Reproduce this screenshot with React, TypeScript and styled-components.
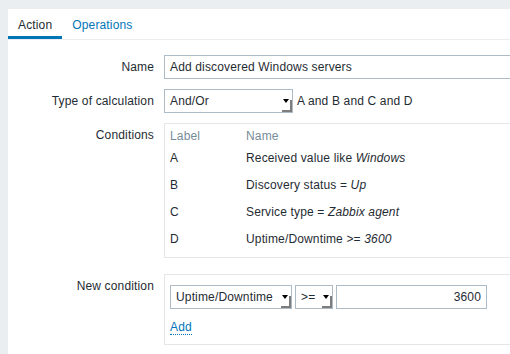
import React from 'react';
import styled, { createGlobalStyle } from 'styled-components';

const GlobalStyle = createGlobalStyle`
  html, body {
    margin: 0;
    padding: 0;
    background: #ebeef0;
    overflow: hidden;
  }
  body {
    font-family: "Liberation Sans", Arial, sans-serif;
    font-size: 12px;
    letter-spacing: 0.15px;
    color: #1f2c33;
  }
`;

const Page = styled.div`
  padding: 9px 0 0 8px;
  height: 354px;
  box-sizing: border-box;
`;

const Panel = styled.div`
  background: #ffffff;
  height: 100%;
  overflow: hidden;
`;

const TabBar = styled.div`
  display: flex;
  border-bottom: 1px solid #ebeef0;
`;

const Tab = styled.div<{ $active?: boolean }>`
  height: 30px;
  box-sizing: border-box;
  padding: 9px 10px 0;
  line-height: 14px;
  border-bottom: 3px solid ${p => (p.$active ? '#0275b8' : 'transparent')};
  color: ${p => (p.$active ? '#1f2c33' : '#0275b8')};
`;

// the form is wider than the window; the panel clips it on the right
const Form = styled.div`
  padding-top: 15px;
  width: 620px;
`;

const FormRow = styled.div<{ $space?: number }>`
  display: grid;
  grid-template-columns: 146px 1fr;
  column-gap: 10px;
  margin-bottom: ${p => p.$space ?? 10}px;
`;

const RowLabel = styled.div`
  text-align: right;
  line-height: 24px;
  white-space: nowrap;
`;

const RowField = styled.div<{ $gap?: number }>`
  display: flex;
  align-items: center;
  gap: ${p => p.$gap ?? 4}px;
`;

const TextInput = styled.div<{ $width: number; $right?: boolean }>`
  width: ${p => p.$width}px;
  height: 24px;
  box-sizing: border-box;
  border: 1px solid #acbbc5;
  padding: 0 5px;
  line-height: 22px;
  text-align: ${p => (p.$right ? 'right' : 'left')};
  white-space: nowrap;
  overflow: hidden;
  flex-shrink: 0;
`;

const Select = styled.div<{ $width: number }>`
  width: ${p => p.$width}px;
  height: 24px;
  box-sizing: border-box;
  border: 1px solid #acbbc5;
  display: flex;
  flex-shrink: 0;
`;

const SelectText = styled.div`
  flex: 1;
  padding-left: 5px;
  line-height: 22px;
  white-space: nowrap;
  overflow: hidden;
`;

const SelectArrow = styled.div`
  width: 10px;
  display: flex;
  justify-content: center;
  padding-top: 9px;
  box-sizing: border-box;
  background:
    linear-gradient(#7d7d7d, #7d7d7d) right bottom / 2px 55% no-repeat,
    linear-gradient(#7d7d7d, #7d7d7d) right bottom / 100% 2px no-repeat;

  &::after {
    content: '';
    width: 0;
    height: 0;
    margin-right: 2px;
    border-left: 3px solid transparent;
    border-right: 3px solid transparent;
    border-top: 4px solid #000;
  }
`;

const Hint = styled.span`
  white-space: nowrap;
`;

const Box = styled.div<{ $pad: string }>`
  border: 1px solid #e3e7ea;
  padding: ${p => p.$pad};
`;

const CondTable = styled.div`
  display: grid;
  grid-template-columns: 76px 1fr;
`;

const HeadCell = styled.div`
  color: #768d99;
  line-height: 17px;
`;

const Cell = styled.div`
  line-height: 27px;
  white-space: nowrap;
`;

const LinkRow = styled.div`
  margin-top: 11px;
  line-height: 14px;
`;

const Link = styled.span`
  color: #0275b8;
  border-bottom: 1px dotted #0275b8;
`;

const conditions: { label: string; text: string; value: string }[] = [
  { label: 'A', text: 'Received value like ', value: 'Windows' },
  { label: 'B', text: 'Discovery status = ', value: 'Up' },
  { label: 'C', text: 'Service type = ', value: 'Zabbix agent' },
  { label: 'D', text: 'Uptime/Downtime >= ', value: '3600' },
];

export default function App() {
  return (
    <>
      <GlobalStyle />
      <Page>
        <Panel>
          <TabBar>
            <Tab $active>Action</Tab>
            <Tab>Operations</Tab>
          </TabBar>
          <Form>
            <FormRow>
              <RowLabel>Name</RowLabel>
              <RowField>
                <TextInput $width={453}>Add discovered Windows servers</TextInput>
              </RowField>
            </FormRow>
            <FormRow>
              <RowLabel>Type of calculation</RowLabel>
              <RowField>
                <Select $width={129}>
                  <SelectText>And/Or</SelectText>
                  <SelectArrow />
                </Select>
                <Hint>A and B and C and D</Hint>
              </RowField>
            </FormRow>
            <FormRow $space={16}>
              <RowLabel>Conditions</RowLabel>
              <Box $pad="4px 5px">
                <CondTable>
                  <HeadCell>Label</HeadCell>
                  <HeadCell>Name</HeadCell>
                  {conditions.map(c => (
                    <React.Fragment key={c.label}>
                      <Cell>{c.label}</Cell>
                      <Cell>
                        {c.text}
                        <i>{c.value}</i>
                      </Cell>
                    </React.Fragment>
                  ))}
                </CondTable>
              </Box>
            </FormRow>
            <FormRow>
              <RowLabel>New condition</RowLabel>
              <Box $pad="10px 5px 10px">
                <RowField $gap={3}>
                  <Select $width={122}>
                    <SelectText>Uptime/Downtime</SelectText>
                    <SelectArrow />
                  </Select>
                  <Select $width={38}>
                    <SelectText>&gt;=</SelectText>
                    <SelectArrow />
                  </Select>
                  <TextInput $width={151} $right>3600</TextInput>
                </RowField>
                <LinkRow>
                  <Link>Add</Link>
                </LinkRow>
              </Box>
            </FormRow>
          </Form>
        </Panel>
      </Page>
    </>
  );
}
